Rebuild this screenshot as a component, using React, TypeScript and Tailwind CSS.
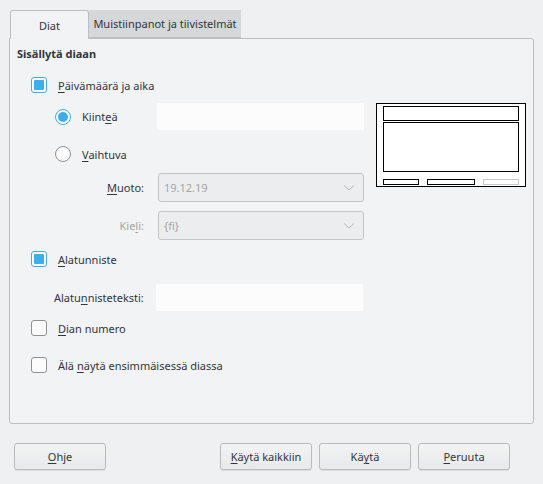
import React from "react";

const U = ({ children }: { children: React.ReactNode }) => (
  <span className="underline underline-offset-2 decoration-[1px]">{children}</span>
);

const Checkbox = ({ checked }: { checked?: boolean }) => (
  <div
    className={
      "w-[16px] h-[16px] rounded-[3px] border flex items-center justify-center shrink-0 " +
      (checked ? "border-[#3daee9] bg-[#fcfcfc]" : "border-[#8e9194] bg-[#fcfcfc]")
    }
  >
    {checked && <div className="w-[10px] h-[10px] bg-[#3daee9] rounded-[1px]" />}
  </div>
);

const Radio = ({ checked }: { checked?: boolean }) => (
  <div
    className={
      "w-[16px] h-[16px] rounded-full border flex items-center justify-center shrink-0 " +
      (checked ? "border-[#3daee9] bg-[#fcfcfc]" : "border-[#8e9194] bg-[#fcfcfc]")
    }
  >
    {checked && <div className="w-[10px] h-[10px] bg-[#3daee9] rounded-full" />}
  </div>
);

const Combo = ({ value }: { value: string }) => (
  <div className="w-[206px] h-[29px] rounded-[3px] border border-[#c3c5c7] bg-[#ecedee] flex items-center justify-between pl-[5px] pr-[8px] text-[#a3a5a7]">
    <span>{value}</span>
    <svg width="12" height="8" viewBox="0 0 12 8">
      <path d="M1 1.5 L6 6 L11 1.5" fill="none" stroke="#b3b5b7" strokeWidth="1" />
    </svg>
  </div>
);

const Button = ({ children, w = "w-[92px]" }: { children: React.ReactNode; w?: string }) => (
  <div
    className={
      w +
      " h-[27px] rounded-[3px] border border-[#b9bbbd] bg-gradient-to-b from-[#f2f3f3] to-[#e8e9ea] shadow-[0_1px_1px_rgba(0,0,0,0.08)] flex items-center justify-center text-[#31363b]"
    }
  >
    {children}
  </div>
);

export default function App() {
  return (
    <div
      className="w-[543px] h-[484px] bg-[#eff0f1] text-[#31363b] text-[11px] leading-none"
      style={{ fontFamily: '"Noto Sans", "DejaVu Sans", sans-serif' }}
    >
      <div className="pt-[10px] pl-[10px] flex">
        <div className="w-[79px] h-[29px] rounded-t-[3px] border border-b-0 border-[#bcbec0] bg-[#f2f3f4] flex items-center justify-center relative z-10">
          Diat
        </div>
        <div className="w-[152px] h-[28px] bg-[#d6d7d8] flex items-center justify-center border-b border-[#bcbec0]">
          Muistiinpanot ja tiivistelmät
        </div>
      </div>
      <div className="ml-[9px] mt-[-1px] w-[525px] h-[386px] border border-[#bcbec0] rounded-b-[3px] rounded-tr-[3px] bg-[#f2f3f4] px-[7px]">
        <div className="mt-[5px] h-[18px] flex items-center font-bold">Sisällytä diaan</div>
        <div className="mt-[13px] h-[20px] flex items-center pl-[14px] gap-[11px]">
          <Checkbox checked />
          <span>
            <U>P</U>äivämäärä ja aika
          </span>
        </div>
        <div className="mt-[8px] flex">
          <div className="w-[352px]">
            <div className="h-[27px] flex items-center">
              <div className="w-[140px] flex items-center pl-[38px] gap-[11px]">
                <Radio checked />
                <span>
                  Kiint<U>e</U>ä
                </span>
              </div>
              <div className="w-[207px] h-[27px] bg-[#fcfcfc]" />
            </div>
            <div className="mt-[14px] h-[20px] flex items-center pl-[38px] gap-[11px]">
              <Radio />
              <span>
                <U>V</U>aihtuva
              </span>
            </div>
            <div className="mt-[9px] flex items-center">
              <div className="w-[127px] text-right pr-[0px]">
                <U>M</U>uoto:
              </div>
              <div className="ml-[14px]">
                <Combo value="19.12.19" />
              </div>
            </div>
            <div className="mt-[9px] flex items-center">
              <div className="w-[127px] text-right text-[#a3a5a7]">
                Kie<U>l</U>i:
              </div>
              <div className="ml-[14px]">
                <Combo value="{fi}" />
              </div>
            </div>
          </div>
          <div className="ml-[7px]">
            <svg width="150" height="84" viewBox="0 0 150 84" shapeRendering="crispEdges">
              <rect x="0.5" y="0.5" width="149" height="83" fill="#ffffff" stroke="#000" strokeWidth="1" />
              <rect x="7.5" y="3.5" width="135" height="14" fill="none" stroke="#000" strokeWidth="1" />
              <rect x="7.5" y="19.5" width="135" height="49" fill="none" stroke="#000" strokeWidth="1" />
              <rect x="7.5" y="76.5" width="35" height="5" fill="none" stroke="#000" strokeWidth="1" />
              <rect x="51.5" y="76.5" width="47" height="5" fill="none" stroke="#000" strokeWidth="1" />
              <rect x="107.5" y="76.5" width="35" height="5" fill="none" stroke="#c8c8c8" strokeWidth="1" />
            </svg>
          </div>
        </div>
        <div className="mt-[9px] h-[20px] flex items-center pl-[14px] gap-[11px]">
          <Checkbox checked />
          <span>
            <U>A</U>latunniste
          </span>
        </div>
        <div className="mt-[15px] h-[27px] flex items-center">
          <div className="w-[139px] pl-[37px]">
            Alatu<U>n</U>nisteteksti:
          </div>
          <div className="w-[207px] h-[27px] bg-[#fcfcfc]" />
        </div>
        <div className="mt-[7px] h-[20px] flex items-center pl-[14px] gap-[11px]">
          <Checkbox />
          <span>
            <U>D</U>ian numero
          </span>
        </div>
        <div className="mt-[17px] h-[20px] flex items-center pl-[14px] gap-[11px]">
          <Checkbox />
          <span>
            Älä <U>n</U>äytä ensimmäisessä diassa
          </span>
        </div>
      </div>
      <div className="mt-[19px] flex pl-[14px]">
        <Button>
          <span>
            <U>O</U>hje
          </span>
        </Button>
        <div className="ml-[114px]">
          <Button>
            <span>
              <U>K</U>äytä kaikkiin
            </span>
          </Button>
        </div>
        <div className="ml-[7px]">
          <Button>
            <span>
              Kä<U>y</U>tä
            </span>
          </Button>
        </div>
        <div className="ml-[7px]">
          <Button>
            <span>
              <U>P</U>eruuta
            </span>
          </Button>
        </div>
      </div>
    </div>
  );
}
